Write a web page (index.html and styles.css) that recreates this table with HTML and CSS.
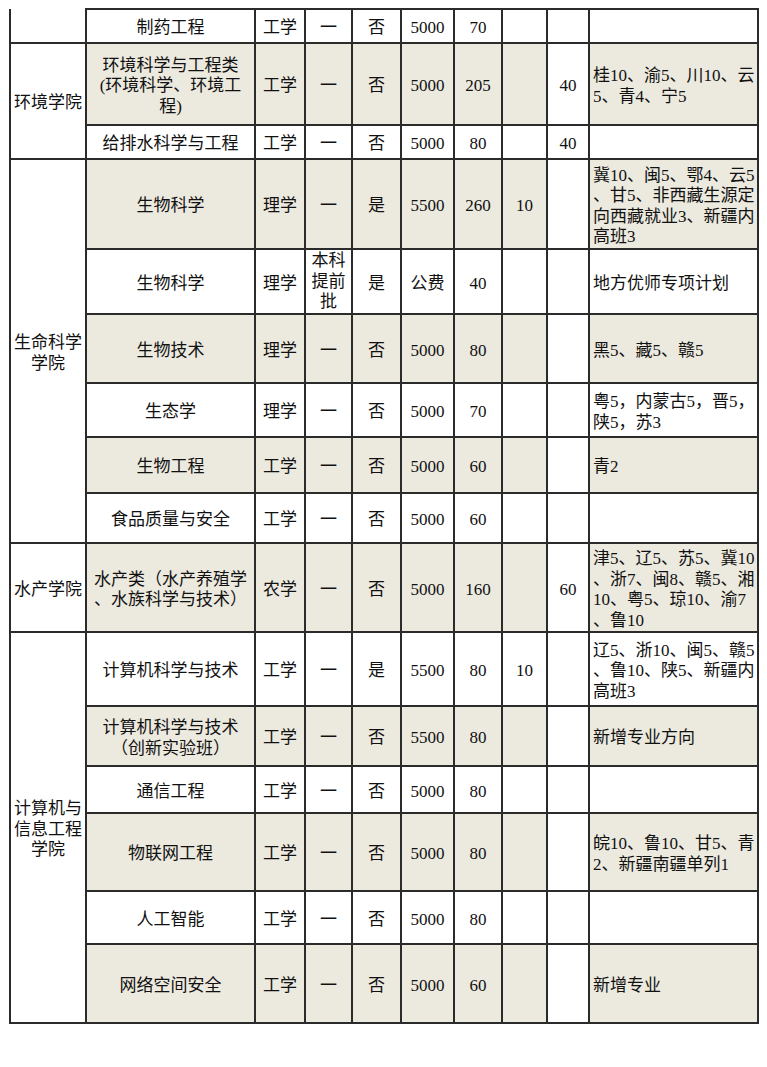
FILE: index.html
```html
<!DOCTYPE html>
<html lang="zh-CN">
<head>
<meta charset="utf-8">
<title>招生计划</title>
<link rel="stylesheet" href="styles.css">
</head>
<body>
<table class="sheet">
  <colgroup>
    <col class="c-college">
    <col class="c-major">
    <col class="c-cat">
    <col class="c-batch">
    <col class="c-yn">
    <col class="c-fee">
    <col class="c-num">
    <col class="c-a">
    <col class="c-b">
    <col class="c-note">
  </colgroup>
  <tbody>
    <tr class="r1">
      <td class="college cont"></td>
      <td>制药工程</td><td>工学</td><td>一</td><td>否</td><td>5000</td><td>70</td><td></td><td class="plain"></td><td class="note"></td>
    </tr>
    <tr class="r2 alt">
      <td class="college" rowspan="2">环境学院</td>
      <td>环境科学与工程类<br>(环境科学、环境工<br>程)</td><td>工学</td><td>一</td><td>否</td><td>5000</td><td>205</td><td></td><td class="plain">40</td><td class="note">桂10、渝5、川10、云<br>5、青4、宁5</td>
    </tr>
    <tr class="r3">
      <td>给排水科学与工程</td><td>工学</td><td>一</td><td>否</td><td>5000</td><td>80</td><td></td><td class="plain">40</td><td class="note"></td>
    </tr>
    <tr class="r4 alt">
      <td class="college" rowspan="6">生命科学<br>学院</td>
      <td>生物科学</td><td>理学</td><td>一</td><td>是</td><td>5500</td><td>260</td><td>10</td><td class="plain"></td><td class="note">冀10、闽5、鄂4、云5<br>、甘5、非西藏生源定<br>向西藏就业3、新疆内<br>高班3</td>
    </tr>
    <tr class="r5">
      <td>生物科学</td><td>理学</td><td class="tight">本科<br>提前<br>批</td><td>是</td><td>公费</td><td>40</td><td></td><td class="plain"></td><td class="note">地方优师专项计划</td>
    </tr>
    <tr class="r6 alt">
      <td>生物技术</td><td>理学</td><td>一</td><td>否</td><td>5000</td><td>80</td><td></td><td class="plain"></td><td class="note">黑5、藏5、赣5</td>
    </tr>
    <tr class="r7">
      <td>生态学</td><td>理学</td><td>一</td><td>否</td><td>5000</td><td>70</td><td></td><td class="plain"></td><td class="note">粤5，内蒙古5，晋5，<br>陕5，苏3</td>
    </tr>
    <tr class="r8 alt">
      <td>生物工程</td><td>工学</td><td>一</td><td>否</td><td>5000</td><td>60</td><td></td><td class="plain"></td><td class="note">青2</td>
    </tr>
    <tr class="r9">
      <td>食品质量与安全</td><td>工学</td><td>一</td><td>否</td><td>5000</td><td>60</td><td></td><td class="plain"></td><td class="note"></td>
    </tr>
    <tr class="r10 alt">
      <td class="college">水产学院</td>
      <td>水产类（水产养殖学<br>、水族科学与技术）</td><td>农学</td><td>一</td><td>否</td><td>5000</td><td>160</td><td></td><td class="plain">60</td><td class="note">津5、辽5、苏5、冀10<br>、浙7、闽8、赣5、湘<br>10、粤5、琼10、渝7<br>、鲁10</td>
    </tr>
    <tr class="r11">
      <td class="college" rowspan="6">计算机与<br>信息工程<br>学院</td>
      <td>计算机科学与技术</td><td>工学</td><td>一</td><td>是</td><td>5500</td><td>80</td><td>10</td><td class="plain"></td><td class="note">辽5、浙10、闽5、赣5<br>、鲁10、陕5、新疆内<br>高班3</td>
    </tr>
    <tr class="r12 alt">
      <td>计算机科学与技术<br>（创新实验班）</td><td>工学</td><td>一</td><td>否</td><td>5500</td><td>80</td><td></td><td class="plain"></td><td class="note">新增专业方向</td>
    </tr>
    <tr class="r13">
      <td>通信工程</td><td>工学</td><td>一</td><td>否</td><td>5000</td><td>80</td><td></td><td class="plain"></td><td class="note"></td>
    </tr>
    <tr class="r14 alt">
      <td>物联网工程</td><td>工学</td><td>一</td><td>否</td><td>5000</td><td>80</td><td></td><td class="plain"></td><td class="note">皖10、鲁10、甘5、青<br>2、新疆南疆单列1</td>
    </tr>
    <tr class="r15">
      <td>人工智能</td><td>工学</td><td>一</td><td>否</td><td>5000</td><td>80</td><td></td><td class="plain"></td><td class="note"></td>
    </tr>
    <tr class="r16 alt">
      <td>网络空间安全</td><td>工学</td><td>一</td><td>否</td><td>5000</td><td>60</td><td></td><td class="plain"></td><td class="note">新增专业</td>
    </tr>
  </tbody>
</table>
</body>
</html>
```

FILE: styles.css
```css
html, body {
  margin: 0;
  padding: 0;
  background: #ffffff;
}

.sheet {
  border-collapse: collapse;
  table-layout: fixed;
  width: 748px;
  margin: 8px 0 0 9px;
  font-family: "Liberation Serif", "Noto Sans CJK SC", serif;
  font-size: 17px;
  line-height: 20.5px;
  color: #111111;
}

.c-college { width: 76px; }
.c-major   { width: 169px; }
.c-cat     { width: 50px; }
.c-batch   { width: 47px; }
.c-yn      { width: 49px; }
.c-fee     { width: 53px; }
.c-num     { width: 48px; }
.c-a       { width: 45px; }
.c-b       { width: 42px; }
.c-note    { width: 169px; }

.sheet td {
  border: 2px solid #2b2b2b;
  padding: 5px 2px 0;
  text-align: center;
  vertical-align: middle;
  background: #ffffff;
}

.sheet td.tight {
  padding-top: 1px;
}

.sheet tr.alt td {
  background: #ece9df;
}

.sheet tr.alt td.plain,
.sheet tr.alt td.college {
  background: #ffffff;
}

.sheet td.cont {
  border-top: none;
}

.sheet td.note {
  text-align: left;
  white-space: nowrap;
  padding-left: 3px;
}

.r1  { height: 34px; }
.r2  { height: 82px; }
.r3  { height: 34px; }
.r4  { height: 90px; }
.r5  { height: 65px; }
.r6  { height: 69px; }
.r7  { height: 54px; }
.r8  { height: 56px; }
.r9  { height: 50px; }
.r10 { height: 89px; }
.r11 { height: 74px; }
.r12 { height: 60px; }
.r13 { height: 47px; }
.r14 { height: 78px; }
.r15 { height: 53px; }
.r16 { height: 79px; }
```
